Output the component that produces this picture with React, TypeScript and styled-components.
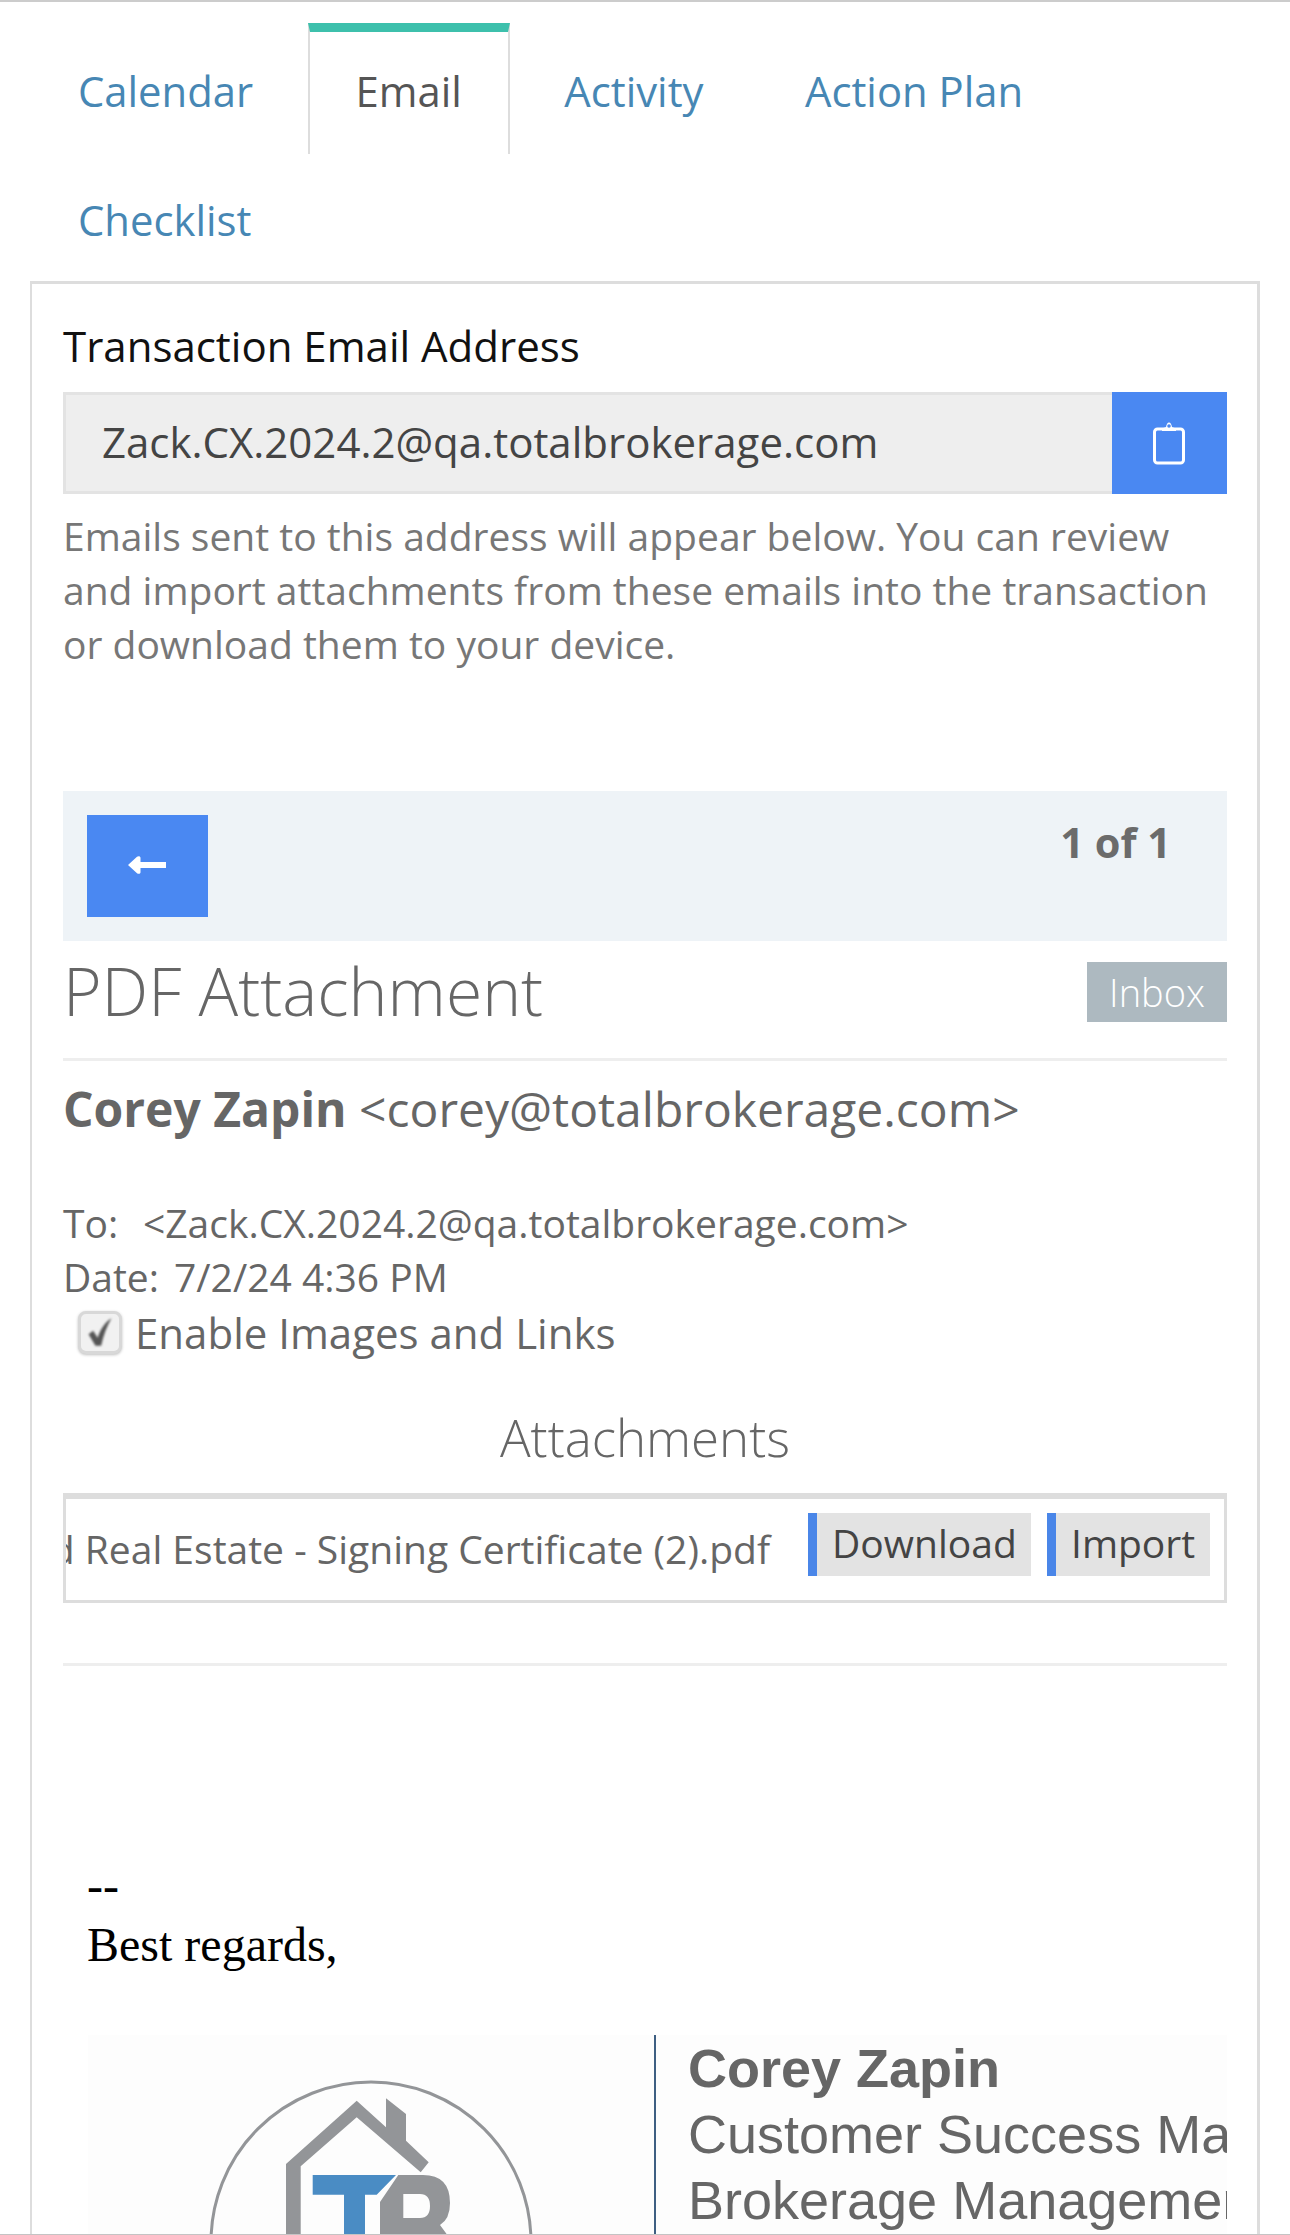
import React from "react";
import styled, { createGlobalStyle } from "styled-components";

const Global = createGlobalStyle`
  html, body { margin: 0; padding: 0; background: #fff; }
  body { font-family: "Open Sans", "Noto Sans", sans-serif; color: #666; }
  * { box-sizing: border-box; }
`;

const Page = styled.div`
  width: 1290px;
  height: 2235px;
  overflow: hidden;
  background: #fff;
  border-top: 2px solid #ccc;
  border-bottom: 1px solid #c4c4c4;
`;

const Tabs = styled.nav`
  display: flex;
  flex-wrap: wrap;
  align-items: flex-start;
  column-gap: 7.5px;
  padding: 21px 0 0 31px;
`;

const Tab = styled.a<{ $active?: boolean }>`
  display: block;
  height: ${(p) => (p.$active ? "131px" : "129px")};
  margin-bottom: ${(p) => (p.$active ? "-2px" : "0")};
  padding: 0 ${(p) => (p.$active ? "46px" : "45px")};
  border-top: 9px solid ${(p) => (p.$active ? "#3dc0ac" : "transparent")};
  border-left: 2px solid ${(p) => (p.$active ? "#ddd" : "transparent")};
  border-right: 2px solid ${(p) => (p.$active ? "#ddd" : "transparent")};
  font-size: 41.8px;
  line-height: 118px;
  color: ${(p) => (p.$active ? "#555" : "#4787b4")};
  white-space: nowrap;
`;

const Panel = styled.section`
  width: 1230px;
  margin-left: 30px;
  height: 1960px;
  border: 3px solid #ddd;
  border-bottom: 0;
  border-left-width: 2px;
  padding: 36px 30px 0 31px;
`;

const FieldLabel = styled.div`
  font-size: 42px;
  line-height: 52px;
  color: #111;
`;

const AddressRow = styled.div`
  display: flex;
  height: 102px;
  margin-top: 20px;
`;

const AddressValue = styled.div`
  flex: 1;
  background: #eee;
  border: 3px solid #e3e3e3;
  border-right: 0;
  padding-left: 36px;
  font-size: 42px;
  line-height: 94px;
  color: #444;
`;

const CopyButton = styled.button`
  width: 115px;
  border: 0;
  padding: 0 2px 0 0;
  background: #4a88f2;
  display: flex;
  align-items: center;
  justify-content: center;
`;

const Help = styled.p`
  margin: 15px 0 0;
  font-size: 39px;
  line-height: 54px;
  color: #777;
`;

const Pager = styled.div`
  display: flex;
  justify-content: space-between;
  align-items: flex-start;
  height: 150px;
  margin-top: 120px;
  padding: 24px 56px 0 24px;
  background: #eef3f7;
`;

const BackButton = styled.button`
  width: 121px;
  height: 102px;
  border: 0;
  padding: 0 2px 2px 0;
  background: #4a88f2;
  display: flex;
  align-items: center;
  justify-content: center;
`;

const PageCount = styled.div`
  font-size: 41.5px;
  line-height: 54px;
  font-weight: 700;
  color: #6b6b6b;
`;

const SubjectRow = styled.div`
  display: flex;
  justify-content: space-between;
  align-items: flex-start;
  height: 60px;
  margin-top: 21px;
`;

const Subject = styled.h1`
  margin: 0;
  font-size: 66px;
  line-height: 56px;
  font-weight: 300;
  color: #666;
`;

const FolderBadge = styled.div`
  width: 140px;
  height: 60px;
  background: #adb9c0;
  color: #fff;
  font-size: 38px;
  font-weight: 300;
  line-height: 60px;
  text-align: center;
`;

const Rule = styled.hr<{ $top: number }>`
  margin: ${(p) => p.$top}px 0 0;
  border: 0;
  height: 3px;
  background: #eee;
`;

const Sender = styled.div`
  margin-top: 19px;
  font-size: 48px;
  line-height: 58px;
  color: #666;
  white-space: nowrap;
  strong { font-weight: 700; }
`;

const MetaList = styled.div`
  margin-top: 58px;
`;

const MetaLine = styled.div`
  display: flex;
  font-size: 39px;
  line-height: 54px;
  color: #666;
`;

const MetaKey = styled.span<{ $w: number }>`
  width: ${(p) => p.$w}px;
`;

const CheckRow = styled.label`
  display: flex;
  align-items: center;
  gap: 13px;
  height: 54px;
  margin-top: 1px;
  padding-left: 15px;
  font-size: 42px;
  color: #666;
`;

const CheckBox = styled.span`
  width: 44px;
  height: 43px;
  border: 3px solid #d8d8d8;
  border-radius: 8px;
  background: #f1f1f1;
  box-shadow: 0 1px 3px rgba(0, 0, 0, 0.25);
  display: flex;
  align-items: center;
  justify-content: center;
`;

const CheckMark = styled.svg`
  width: 30px;
  height: 32px;
  filter: blur(0.8px);
`;

const SectionTitle = styled.h2`
  margin: 48px 0 0;
  text-align: center;
  font-size: 51px;
  line-height: 60px;
  font-weight: 300;
  color: #666;
`;

const AttachmentBox = styled.div`
  display: flex;
  align-items: flex-start;
  height: 110px;
  margin-top: 26px;
  border: 3px solid #ddd;
  border-top-width: 6px;
  padding: 14px 14px 0 0;
`;

const FileName = styled.div`
  flex: 1;
  min-width: 0;
  overflow: hidden;
  display: flex;
  justify-content: flex-end;
  padding-right: 38px;
  font-size: 39px;
  line-height: 63px;
  margin-top: 4px;
  color: #666;
  white-space: nowrap;
`;

const AttachmentButton = styled.button<{ $w: number }>`
  width: ${(p) => p.$w}px;
  height: 63px;
  margin-left: ${(p) => (p.$w > 200 ? "0" : "16px")};
  border: 0;
  border-left: 9px solid #4a86e8;
  background: #e3e3e3;
  padding: 0 0 4px 15px;
  font-family: inherit;
  font-size: 39px;
  line-height: 53px;
  color: #444;
  text-align: left;
`;

const MailBody = styled.div`
  margin-top: 190px;
  padding-left: 24px;
  font-family: "Liberation Serif", serif;
  font-size: 48px;
  line-height: 59px;
  color: #000;
`;

const Signature = styled.div`
  display: flex;
  height: 220px;
  margin-top: 61px;
  margin-left: 25px;
  overflow: hidden;
  background: #fdfdfd;
`;

const LogoCell = styled.div`
  width: 566px;
  flex: none;
`;

const SignatureText = styled.div`
  flex: 1;
  min-width: 0;
  border-left: 2px solid #3e5f82;
  padding-left: 32px;
  overflow: hidden;
  font-family: "Liberation Sans", Arial, sans-serif;
  font-size: 54px;
  line-height: 66px;
  color: #666;
  white-space: nowrap;
  strong { display: block; font-weight: 700; }
  span { display: block; }
`;

const App = () => (
  <Page>
    <Global />
    <Tabs>
      <Tab>Calendar</Tab>
      <Tab $active>Email</Tab>
      <Tab>Activity</Tab>
      <Tab>Action Plan</Tab>
      <Tab>Checklist</Tab>
    </Tabs>
    <Panel>
      <FieldLabel>Transaction Email Address</FieldLabel>
      <AddressRow>
        <AddressValue>Zack.CX.2024.2@qa.totalbrokerage.com</AddressValue>
        <CopyButton aria-label="Copy">
          <svg width="34" height="46" viewBox="0 0 34 46" fill="none">
            <rect x="2.5" y="9" width="29" height="34" rx="3" stroke="#fff" strokeWidth="3" />
            <path d="M10 9c1-1 3-1.500 4-2 .5-2.500 1.500-4.500 3-4.500s2.500 2 3 4.500c1 .5 3 1 4 2v2H10z" fill="#fff" />
            <circle cx="17" cy="6" r="1.800" fill="#4a88f2" />
          </svg>
        </CopyButton>
      </AddressRow>
      <Help>
        Emails sent to this address will appear below. You can review and import attachments from these emails into the transaction or download them to your device.
      </Help>
      <Pager>
        <BackButton aria-label="Back">
          <svg width="38" height="18" viewBox="0 0 38 18">
            <path d="M0 9 9 .8c1.200-1 3.500-.8 3.500 1V6H38v6H12.500v4.200c0 1.800-2.300 2-3.500 1z" fill="#fff" />
          </svg>
        </BackButton>
        <PageCount>1 of 1</PageCount>
      </Pager>
      <SubjectRow>
        <Subject>PDF Attachment</Subject>
        <FolderBadge>Inbox</FolderBadge>
      </SubjectRow>
      <Rule $top={36} />
      <Sender>
        <strong>Corey Zapin</strong> &lt;corey@totalbrokerage.com&gt;
      </Sender>
      <MetaList>
        <MetaLine>
          <MetaKey $w={80}>To:</MetaKey>
          <span>&lt;Zack.CX.2024.2@qa.totalbrokerage.com&gt;</span>
        </MetaLine>
        <MetaLine>
          <MetaKey $w={111}>Date:</MetaKey>
          <span>7/2/24 4:36 PM</span>
        </MetaLine>
      </MetaList>
      <CheckRow>
        <CheckBox>
          <CheckMark viewBox="0 0 26 28">
            <path d="M3 16l4-3 4 6c2-7 6-13 12-17-4 7-7 15-9 24h-5z" fill="#555" />
          </CheckMark>
        </CheckBox>
        Enable Images and Links
      </CheckRow>
      <SectionTitle>Attachments</SectionTitle>
      <AttachmentBox>
        <FileName>d Real Estate - Signing Certificate (2).pdf</FileName>
        <AttachmentButton $w={223}>Download</AttachmentButton>
        <AttachmentButton $w={163}>Import</AttachmentButton>
      </AttachmentBox>
      <Rule $top={60} />
      <MailBody>
        <div>--</div>
        <div>Best regards,</div>
      </MailBody>
      <Signature>
        <LogoCell>
          <svg width="566" height="220" viewBox="88 2036 566 220">
            <circle cx="371" cy="2243" r="160" fill="none" stroke="#939598" strokeWidth="3" />
            <path d="M286 2165 356.700 2101.700 386 2128.300V2099.300L406 2115V2141.700L428.700 2163.300 420.700 2173.300 356.700 2118.300 300.700 2167.300V2256H286z" fill="#939598" />
            <path d="M312.700 2176H396L376.700 2195.700H365V2256H344V2195.700H312.700z" fill="#4a8cc4" />
            <path fillRule="evenodd" d="M398.300 2176H423Q450 2176 450 2204 450 2220 440 2226L462 2256H380V2203zM403.300 2195V2219H420Q430 2219 430 2207 430 2195 420 2195z" fill="#939598" />
          </svg>
        </LogoCell>
        <SignatureText>
          <strong>Corey Zapin</strong>
          <span>Customer Success Manager</span>
          <span>Brokerage Management</span>
        </SignatureText>
      </Signature>
    </Panel>
  </Page>
);

export default App;
